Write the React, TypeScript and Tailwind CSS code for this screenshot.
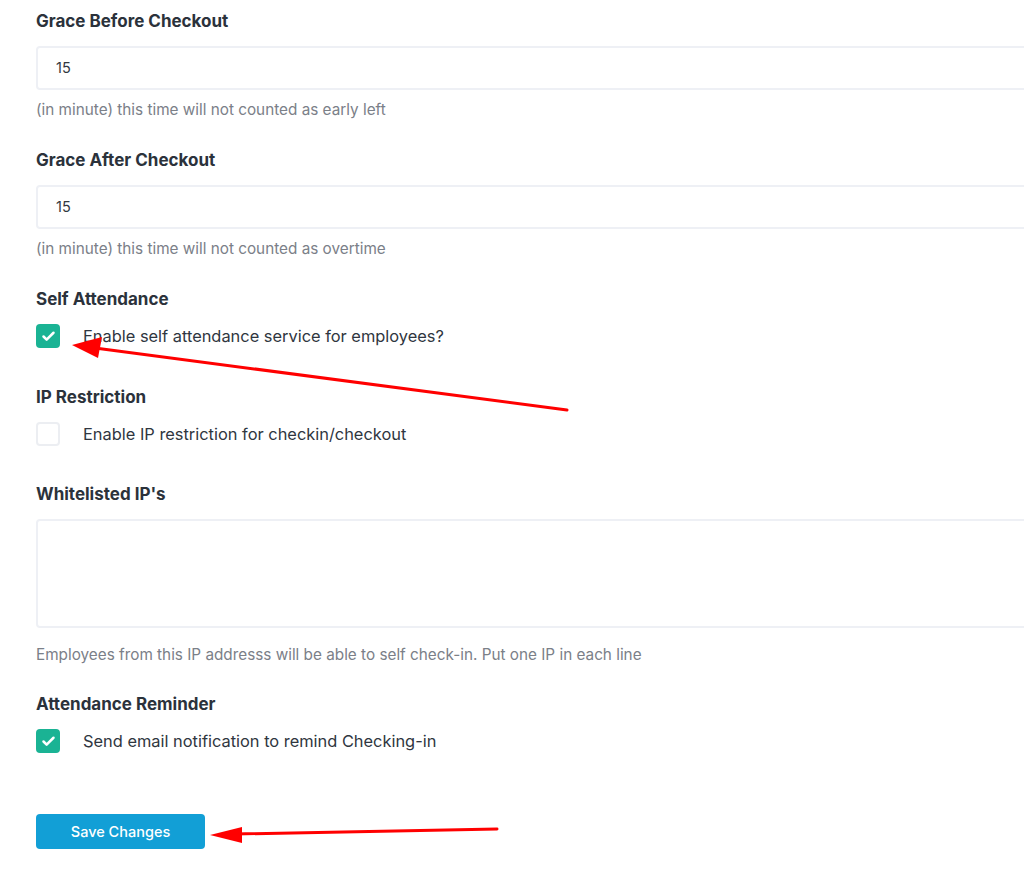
import { Check } from "lucide-react";

const font = { fontFamily: "Inter, 'Noto Sans', sans-serif" };

function Label({ children }: { children: React.ReactNode }) {
    return <div className="h-6 leading-6 text-[17px] font-bold text-[#2b323b]">{children}</div>;
}

function Help({ children, className }: { children: React.ReactNode, className: string }) {
    return <div className={`h-5 leading-5 text-[15.3px] text-[#7b8088] ${className}`}>{children}</div>;
}

function Checkbox({ checked, label }: { checked: boolean, label: string }) {
    return (
        <div className="mt-[13px] flex items-center h-6">
            {checked ? (
                <span className="w-6 h-6 rounded-[4px] bg-[#1ab394] flex items-center justify-center">
                    <Check size={15} strokeWidth={4} color="#fff" />
                </span>
            ) : (
                <span className="w-6 h-6 rounded-[4px] border-2 border-[#eceef2] bg-white" />
            )}
            <span className="ml-[23px] text-[16.4px] text-[#2f3640]">{label}</span>
        </div>
    );
}

export default function App() {
    return (
        <div className="relative w-[1024px] h-[879px] bg-white overflow-hidden" style={font}>
            <div className="pl-9 pt-[9px] flex flex-col">
                <Label>Grace Before Checkout</Label>
                <div className="mt-[13px] h-11 w-[1000px] border-2 border-[#eef0f5] rounded-[4px] flex items-center pl-[18px] text-[14.5px] text-[#33383f]">15</div>
                <Help className="mt-[10px]">(in minute) this time will not counted as early left</Help>

                <div className="mt-7"><Label>Grace After Checkout</Label></div>
                <div className="mt-[13px] h-11 w-[1000px] border-2 border-[#eef0f5] rounded-[4px] flex items-center pl-[18px] text-[14.5px] text-[#33383f]">15</div>
                <Help className="mt-[10px]">(in minute) this time will not counted as overtime</Help>

                <div className="mt-7"><Label>Self Attendance</Label></div>
                <Checkbox checked label="Enable self attendance service for employees?" />

                <div className="mt-[37px]"><Label>IP Restriction</Label></div>
                <Checkbox checked={false} label="Enable IP restriction for checkin/checkout" />

                <div className="mt-9"><Label>Whitelisted IP's</Label></div>
                <div className="mt-[13px] h-[109px] w-[1000px] border-2 border-[#eef0f5] rounded-[4px]" />
                <Help className="mt-[17px]">Employees from this IP addresss will be able to self check-in. Put one IP in each line</Help>

                <div className="mt-[27px]"><Label>Attendance Reminder</Label></div>
                <Checkbox checked label="Send email notification to remind Checking-in" />

                <button className="mt-[61px] w-[169px] h-[35px] rounded-[4px] bg-[#129fd6] text-white text-[14.5px] font-medium">
                    Save Changes
                </button>
            </div>

            <svg className="absolute left-0 top-0 pointer-events-none" width="1024" height="879">
                <line x1="567" y1="410" x2="95" y2="348" stroke="#ff0000" strokeWidth="3" strokeLinecap="round" />
                <polygon points="72,345 102,337 98,358" fill="#ff0000" />
                <line x1="497" y1="829" x2="235" y2="834" stroke="#ff0000" strokeWidth="3" strokeLinecap="round" />
                <polygon points="210,835 242,827 242,843" fill="#ff0000" />
            </svg>
        </div>
    );
}
